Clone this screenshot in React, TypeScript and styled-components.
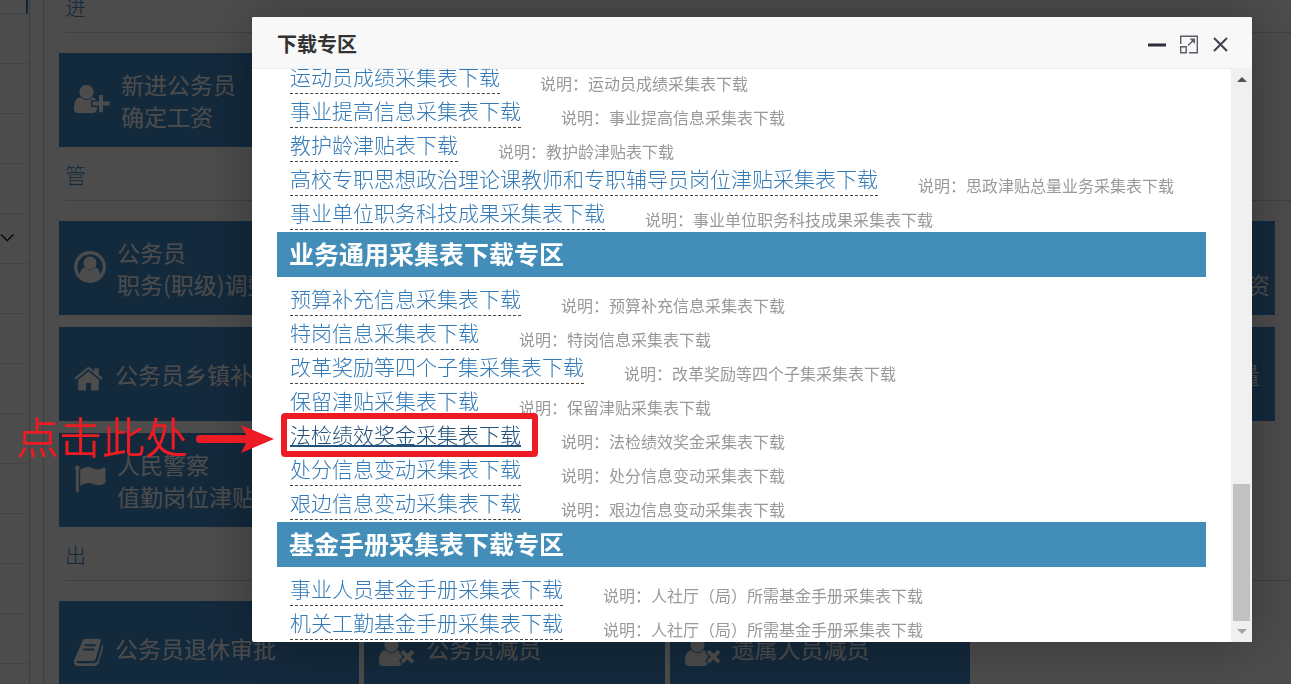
import React from "react";
import styled, { createGlobalStyle, css } from "styled-components";

const GlobalStyle = createGlobalStyle`
  * { box-sizing: border-box; }
  body {
    margin: 0;
    background: #fff;
    color: #333;
    font-family: "Noto Sans CJK SC", sans-serif;
    overflow: hidden;
  }
  h1, h2, h3, p, ul { margin: 0; padding: 0; }
  ul { list-style: none; }
`;

const Page = styled.div`
  display: flex;
  height: 100vh;
  overflow: hidden;
`;

const Sidebar = styled.nav`
  flex: none;
  width: 30px;
  border-right: 1px solid #ccc;
`;

const SidebarItem = styled.div<{ $active?: boolean }>`
  display: flex;
  align-items: center;
  width: 28px;
  height: 50px;
  border-bottom: 1px solid #e0e0e0;
  ${(p) => p.$active && css`
    height: 14px;
    border-right: 2px solid #2b7dbc;
  `}
`;

const Main = styled.main`
  flex: 1;
  margin-left: 13px;
  padding-left: 15px;
  border-left: 1px solid #ccc;
`;

const Sections = styled.div`
  margin-top: -21px;
`;

const SectionTitle = styled.h2`
  margin: 0 0 20px 6px;
  padding: 4px 0 2px;
  border-bottom: 1px solid #cbd9e0;
  color: #428bca;
  font-size: 21px;
  font-weight: 300;
  line-height: 47px;
`;

const Tiles = styled.div`
  display: grid;
  grid-template-columns: repeat(4, 1fr);
  gap: 12px 5px;
  margin-right: 16px;
`;

const TileButton = styled.button<{ $single?: boolean; $last?: boolean }>`
  display: flex;
  align-items: center;
  gap: 11px;
  height: 94px;
  padding: 0 15px;
  border: 0;
  background: #428bca;
  color: #fff;
  font-family: inherit;
  font-size: 23px;
  line-height: 32px;
  text-align: left;
  white-space: pre;
  overflow: hidden;
  svg {
    flex: none;
    margin-top: ${(p) => (p.$single ? 10 : 0)}px;
  }
  ${(p) => p.$last && css`
    grid-column: 4;
    justify-content: flex-end;
    padding-right: ${p.$single ? 15 : 5}px;
  `}
`;

const TileText = styled.span`
  padding-bottom: 1px;
`;

const Shade = styled.div`
  position: fixed;
  inset: 0;
  background: rgba(0, 0, 0, 0.7);
`;

const Dialog = styled.section`
  position: fixed;
  inset: 17px 39px 42px 252px;
  display: flex;
  flex-direction: column;
  background: #fff;
  border-radius: 2px;
  box-shadow: 1px 1px 62px rgba(0, 0, 0, 0.3);
`;

const DialogHeader = styled.header`
  display: flex;
  align-items: center;
  flex: none;
  height: 52px;
  padding: 0 21px 0 25px;
  border-bottom: 1px solid #eee;
  border-radius: 2px 2px 0 0;
  background: #f8f8f8;
`;

const DialogTitle = styled.h1`
  flex: 1;
  padding-top: 2px;
  color: #333;
  font-size: 20px;
  font-weight: 700;
  line-height: 30px;
`;

const DialogTools = styled.div`
  display: flex;
  gap: 12px;
  padding-top: 5px;
`;

const ToolButton = styled.button`
  display: flex;
  width: 20px;
  height: 20px;
  padding: 0;
  border: 0;
  background: none;
`;

const DialogBody = styled.div`
  display: flex;
  flex: 1;
  min-height: 0;
`;

const ScrollContent = styled.div`
  display: flex;
  flex: 1;
  flex-direction: column;
  justify-content: flex-end;
  min-width: 0;
  padding: 0 25px;
  overflow: hidden;
`;

const Bar = styled.h2`
  flex: none;
  padding: 0 12px 2px;
  background: #438eb9;
  color: #fff;
  font-size: 25px;
  font-weight: 700;
  line-height: 43px;
`;

const Downloads = styled.ul`
  flex: none;
  padding: 7px 13px 0;
`;

const Row = styled.li`
  display: flex;
  gap: 40px;
  height: 34px;
  white-space: nowrap;
`;

const DownloadLink = styled.a<{ $hover?: boolean }>`
  position: relative;
  height: 32px;
  border-bottom: 1px dashed #444;
  color: #337ab7;
  font-size: 21px;
  font-weight: 300;
  line-height: 28px;
  text-decoration: none;
  ${(p) => p.$hover && css`
    color: #23527c;
    text-decoration: underline;
    text-underline-offset: 2px;
  `}
`;

const Note = styled.span`
  align-self: flex-end;
  padding-bottom: 1px;
  color: #999;
  font-size: 16px;
  font-weight: 400;
  line-height: 24px;
`;

const Frame = styled.span`
  position: absolute;
  z-index: 1;
  inset: -7px -17px -6px -9px;
  border: 6px solid #ed1c24;
  border-radius: 4px;
`;

const ScrollBar = styled.div`
  display: flex;
  flex: none;
  flex-direction: column;
  width: 21px;
  background: #f0f0f0;
`;

const ScrollArrow = styled.button`
  display: flex;
  align-items: center;
  justify-content: center;
  height: 21px;
  padding: 0;
  border: 0;
  background: none;
`;

const ScrollTrack = styled.div`
  display: flex;
  flex: 1;
  flex-direction: column;
  justify-content: flex-end;
  padding: 0 2px;
`;

const ScrollThumb = styled.div`
  height: 137px;
  background: #c1c1c1;
`;

const Callout = styled.div`
  position: fixed;
  left: 16px;
  top: 411px;
  display: flex;
  align-items: center;
  gap: 8px;
  color: #ed1c24;
  font-size: 43px;
  font-weight: 350;
  line-height: 48px;
  white-space: nowrap;
  svg { margin-top: 8px; }
`;

const Person = () => (
  <>
    <path d="M7 17.2C9 18.8 15.5 18.8 17.8 17.2C21 17 23 20 23 25V28.500Q23 33 18.500 33H4.500Q0 33 0 28.500C0 22 2 17.200 7 17.200Z" />
    <circle cx="12.500" cy="12" r="7.600" stroke="#428bca" strokeWidth="1" />
  </>
);

const UserPlusIcon = () => (
  <svg width="36" height="40" viewBox="0 0 36 40" fill="#fff">
    <Person />
    <path
      d="M24.300 14.300h5.400v6.600h6.600v5.400h-6.600v6.600h-5.400v-6.600h-6.600v-5.400h6.600z"
      stroke="#428bca"
      strokeWidth="1.400"
    />
  </svg>
);

const UserTimesIcon = () => (
  <svg width="36" height="40" viewBox="0 0 36 40" fill="#fff">
    <Person />
    <path
      d="M25.900 15.300h5.200v5.800h5.800v5.200h-5.800v5.800h-5.200v-5.800h-5.800v-5.200h5.800z"
      transform="rotate(45 28.500 23.700)"
      stroke="#428bca"
      strokeWidth="1.200"
    />
  </svg>
);

const UserCircleIcon = () => (
  <svg width="32" height="40" viewBox="0 0 32 40">
    <circle cx="16" cy="19" r="14.300" fill="none" stroke="#fff" strokeWidth="3.200" />
    <circle cx="16" cy="15" r="6.600" fill="#fff" />
    <path d="M5.600 28C6 22.500 8.200 19.500 10.800 19.500C13.500 22.800 18.500 22.800 21.200 19.500C23.800 19.500 26 22.500 26.400 28C21 34.500 11 34.500 5.600 28Z" fill="#fff" />
  </svg>
);

const HomeIcon = () => (
  <svg width="30" height="40" viewBox="0 0 30 40" fill="#fff">
    <path d="M14.500 12.200L24.800 20.700V30.500Q24.800 31.500 23.800 31.500H17V24H12V31.500H5.200Q4.200 31.500 4.200 30.500V20.700Z" />
    <path d="M12.800 8.700Q14.500 7.400 16.200 8.700L20.400 12.200V9.200H24.700V15.800L28.700 19.100L27.300 20.800L14.500 10.200L1.700 20.800L.3 19.100Z" />
  </svg>
);

const FlagIcon = () => (
  <svg width="32" height="40" viewBox="0 0 32 40" fill="#fff">
    <circle cx="3.300" cy="8" r="2.400" />
    <path d="M1.900 8h2.900v23.500q0 .7-.7.7H2.600q-.7 0-.7-.7Z" />
    <path d="M6.200 9.800C11 6.800 15 6.200 19 8.500C22.500 10.300 26 9.500 29.500 7.700Q31.500 7 31.500 9V22Q31.500 23 30.500 23.500C26 25.800 22.500 25.800 18.500 23.800C14 22 10.500 23.500 6.200 26Z" />
  </svg>
);

const BookIcon = () => (
  <svg width="30" height="40" viewBox="0 0 30 40">
    <path d="M9 7Q10 5.700 12 5.700H24.500Q27.500 6 26.500 9L21.800 25.500Q21 28 18.500 28H3.500Q2 28 2.500 29.300Q3 30.200 4.500 30.200H19.500Q22.800 30.200 23.800 27.500L28.300 11.500Q29.800 12.600 29 15L24.800 29.500Q23.500 33 20 33H4Q.5 33 0 29.300Q0 27 .8 25.500Z" fill="#fff" />
    <path d="M10.500 12.200H21.500M9.300 16.500H20.300" stroke="#428bca" strokeWidth="1.900" />
  </svg>
);

const MinimizeIcon = () => (
  <svg width="20" height="20" viewBox="0 0 20 20">
    <path d="M1 8.500h18v3H1z" fill="#2e2d3c" />
  </svg>
);

const MaximizeIcon = () => (
  <svg width="20" height="20" viewBox="0 0 20 20" fill="none" stroke="#5c5b68" strokeWidth="1.400">
    <path d="M1.700 9V1.200H18.300V17.800H10M1.700 11.800H7.200V17.800H1.700ZM9 10.500L15 4.800" />
    <path d="M10.500 3.500H16V9Z" fill="#5c5b68" stroke="none" />
  </svg>
);

const CloseIcon = () => (
  <svg width="20" height="20" viewBox="0 0 20 20" fill="none" stroke="#43424f" strokeWidth="2">
    <path d="M3 3L16 16M16 3L3 16" />
  </svg>
);

type Item = { name: string; note: string; hover?: boolean };

const institution: Item[] = [
  { name: "运动员成绩采集表下载", note: "运动员成绩采集表下载" },
  { name: "事业提高信息采集表下载", note: "事业提高信息采集表下载" },
  { name: "教护龄津贴表下载", note: "教护龄津贴表下载" },
  { name: "高校专职思想政治理论课教师和专职辅导员岗位津贴采集表下载", note: "思政津贴总量业务采集表下载" },
  { name: "事业单位职务科技成果采集表下载", note: "事业单位职务科技成果采集表下载" },
];

const general: Item[] = [
  { name: "预算补充信息采集表下载", note: "预算补充信息采集表下载" },
  { name: "特岗信息采集表下载", note: "特岗信息采集表下载" },
  { name: "改革奖励等四个子集采集表下载", note: "改革奖励等四个子集采集表下载" },
  { name: "保留津贴采集表下载", note: "保留津贴采集表下载" },
  { name: "法检绩效奖金采集表下载", note: "法检绩效奖金采集表下载", hover: true },
  { name: "处分信息变动采集表下载", note: "处分信息变动采集表下载" },
  { name: "艰边信息变动采集表下载", note: "艰边信息变动采集表下载" },
];

const fund: Item[] = [
  { name: "事业人员基金手册采集表下载", note: "人社厅（局）所需基金手册采集表下载" },
  { name: "机关工勤基金手册采集表下载", note: "人社厅（局）所需基金手册采集表下载" },
];

const DownloadList = ({ items }: { items: Item[] }) => (
  <Downloads>
    {items.map((item) => (
      <Row key={item.name}>
        <DownloadLink href="#" $hover={item.hover}>
          {item.name}
          {item.hover && <Frame />}
        </DownloadLink>
        <Note>说明：{item.note}</Note>
      </Row>
    ))}
  </Downloads>
);

type TileProps = { icon?: React.ReactNode; text: string; last?: boolean };

const Tile = ({ icon, text, last }: TileProps) => (
  <TileButton type="button" $single={!text.includes("\n")} $last={last}>
    {icon}
    <TileText>{text}</TileText>
  </TileButton>
);

export default function App() {
  return (
    <>
      <GlobalStyle />
      <Page>
        <Sidebar>
          <SidebarItem $active />
          {Array.from({ length: 14 }, (_, i) => (
            <SidebarItem key={i}>
              {i === 4 && (
                <svg width="15" height="12" viewBox="0 0 15 12" fill="none" stroke="#222" strokeWidth="1.600">
                  <path d="M1 1.500L7.200 7.700L13.400 1.500" />
                </svg>
              )}
            </SidebarItem>
          ))}
        </Sidebar>
        <Main>
          <Sections>
            <SectionTitle>进</SectionTitle>
            <Tiles>
              <Tile icon={<UserPlusIcon />} text={"新进公务员\n确定工资"} />
            </Tiles>
            <SectionTitle>管</SectionTitle>
            <Tiles>
              <Tile icon={<UserCircleIcon />} text={"公务员\n职务(职级)调整"} />
              <Tile text={"公务员\n确定工资"} last />
              <Tile icon={<HomeIcon />} text="公务员乡镇补贴" />
              <Tile text="总量" last />
              <Tile icon={<FlagIcon />} text={"人民警察\n值勤岗位津贴"} />
            </Tiles>
            <SectionTitle>出</SectionTitle>
            <Tiles>
              <Tile icon={<BookIcon />} text="公务员退休审批" />
              <Tile icon={<UserTimesIcon />} text="公务员减员" />
              <Tile icon={<UserTimesIcon />} text="遗属人员减员" />
            </Tiles>
          </Sections>
        </Main>
      </Page>
      <Shade />
      <Dialog role="dialog" aria-labelledby="dialog-title">
        <DialogHeader>
          <DialogTitle id="dialog-title">下载专区</DialogTitle>
          <DialogTools>
            <ToolButton type="button" aria-label="最小化"><MinimizeIcon /></ToolButton>
            <ToolButton type="button" aria-label="最大化"><MaximizeIcon /></ToolButton>
            <ToolButton type="button" aria-label="关闭"><CloseIcon /></ToolButton>
          </DialogTools>
        </DialogHeader>
        <DialogBody>
          <ScrollContent>
            <DownloadList items={institution} />
            <Bar>业务通用采集表下载专区</Bar>
            <DownloadList items={general} />
            <Bar>基金手册采集表下载专区</Bar>
            <DownloadList items={fund} />
          </ScrollContent>
          <ScrollBar>
            <ScrollArrow type="button" aria-label="向上滚动">
              <svg width="10" height="5" viewBox="0 0 10 5"><path d="M0 5L5 0L10 5Z" fill="#505050" /></svg>
            </ScrollArrow>
            <ScrollTrack>
              <ScrollThumb />
            </ScrollTrack>
            <ScrollArrow type="button" aria-label="向下滚动">
              <svg width="10" height="5" viewBox="0 0 10 5"><path d="M0 0L5 5L10 0Z" fill="#a3a3a3" /></svg>
            </ScrollArrow>
          </ScrollBar>
        </DialogBody>
      </Dialog>
      <Callout>
        点击此处
        <svg width="78" height="30" viewBox="0 0 78 30" fill="#ed1c24">
          <path d="M4 11H50L45 1L78 15L45 29L50 19H4A4 4 0 0 1 4 11Z" />
        </svg>
      </Callout>
    </>
  );
}
